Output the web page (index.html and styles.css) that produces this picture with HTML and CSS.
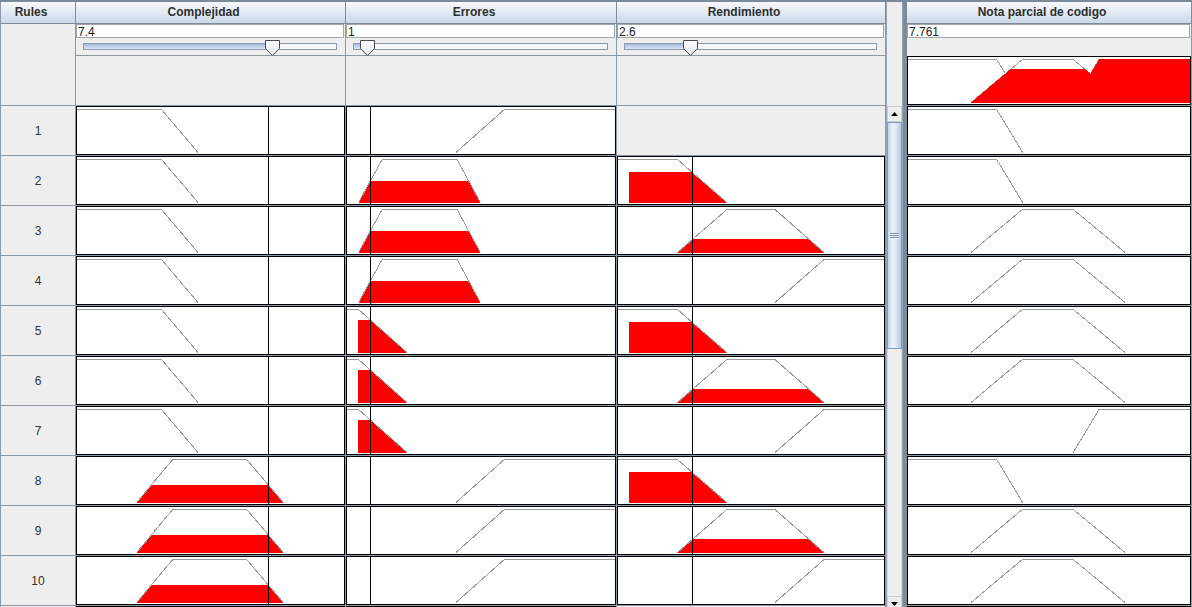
FILE: index.html
```html
<!DOCTYPE html>
<html lang="es">
<head>
<meta charset="utf-8">
<title>Rules</title>
<link rel="stylesheet" href="styles.css">
</head>
<body>
<svg class="defs" width="0" height="0" aria-hidden="true">
  <defs>
    <linearGradient id="thumbg" x1="0" y1="0" x2="0" y2="1">
      <stop offset="0" stop-color="#ffffff"/>
      <stop offset="1" stop-color="#dde4ec"/>
    </linearGradient>
    <!-- Complejidad -->
    <g id="c-low">
      <polyline points="0,2.5 84.5,2.5 121,45.5" fill="none" stroke="#9a9a9a" shape-rendering="crispEdges"/>
      <line x1="191.5" y1="0" x2="191.5" y2="47" stroke="#000" shape-rendering="crispEdges"/>
    </g>
    <g id="c-med">
      <polygon points="59.3,46 74.35,28 191.4,28 206.7,46" fill="#ff0000" shape-rendering="crispEdges"/>
      <polyline points="59.7,45.5 95.7,2.5 169.7,2.5 206.3,45.5" fill="none" stroke="#9a9a9a" shape-rendering="crispEdges"/>
      <line x1="191.5" y1="0" x2="191.5" y2="47" stroke="#000" shape-rendering="crispEdges"/>
    </g>
    <!-- Errores -->
    <g id="e-high">
      <polyline points="109,45.5 157.3,2.5 268,2.5" fill="none" stroke="#9a9a9a" shape-rendering="crispEdges"/>
      <line x1="23.5" y1="0" x2="23.5" y2="47" stroke="#000" shape-rendering="crispEdges"/>
    </g>
    <g id="e-med">
      <polygon points="11.3,46 23.35,24 121.75,24 133.7,46" fill="#ff0000" shape-rendering="crispEdges"/>
      <polyline points="11.6,45.5 35.1,2.5 110.1,2.5 133.4,45.5" fill="none" stroke="#9a9a9a" shape-rendering="crispEdges"/>
      <line x1="23.5" y1="0" x2="23.5" y2="47" stroke="#000" shape-rendering="crispEdges"/>
    </g>
    <g id="e-low">
      <polygon points="11,13 23.44,13 60.66,46 11,46" fill="#ff0000" shape-rendering="crispEdges"/>
      <polyline points="0,2.5 11.6,2.5 60.1,45.5" fill="none" stroke="#9a9a9a" shape-rendering="crispEdges"/>
      <line x1="23.5" y1="0" x2="23.5" y2="47" stroke="#000" shape-rendering="crispEdges"/>
    </g>
    <!-- Rendimiento -->
    <g id="r-low">
      <polygon points="10.5,15 74,15 109.4,46 10.5,46" fill="#ff0000" shape-rendering="crispEdges"/>
      <polyline points="0,2.5 59.5,2.5 108.8,45.5" fill="none" stroke="#9a9a9a" shape-rendering="crispEdges"/>
      <line x1="74.5" y1="0" x2="74.5" y2="47" stroke="#000" shape-rendering="crispEdges"/>
    </g>
    <g id="r-med">
      <polygon points="58.9,46 75,32 190.6,32 206.6,46" fill="#ff0000" shape-rendering="crispEdges"/>
      <polyline points="59.5,45.5 108.8,2.5 157,2.5 206,45.5" fill="none" stroke="#9a9a9a" shape-rendering="crispEdges"/>
      <line x1="74.5" y1="0" x2="74.5" y2="47" stroke="#000" shape-rendering="crispEdges"/>
    </g>
    <g id="r-high">
      <polyline points="157,45.5 206,2.5 266,2.5" fill="none" stroke="#9a9a9a" shape-rendering="crispEdges"/>
      <line x1="74.5" y1="0" x2="74.5" y2="47" stroke="#000" shape-rendering="crispEdges"/>
    </g>
    <!-- Nota parcial de codigo -->
    <polyline id="o-low" points="0,2.5 88.7,2.5 114.7,45.5" fill="none" stroke="#9a9a9a" shape-rendering="crispEdges"/>
    <polyline id="o-med" points="63,45.5 114.3,2.5 165.3,2.5 217,45.5" fill="none" stroke="#9a9a9a" shape-rendering="crispEdges"/>
    <polyline id="o-high" points="165.3,45.5 191,2.5 282,2.5" fill="none" stroke="#9a9a9a" shape-rendering="crispEdges"/>
    <g id="agg">
      <use href="#o-low"/>
      <use href="#o-med"/>
      <use href="#o-high"/>
      <polygon points="62.4,46 103,12 176.7,12 182.5,16.7 191.3,2 282,2 282,46" fill="#ff0000" shape-rendering="crispEdges"/>
    </g>
  </defs>
</svg>

<div class="app">
  <div class="left">
    <div class="hrow">
      <div class="hcell w-rules">Rules</div>
      <div class="hcell w-cx">Complejidad</div>
      <div class="hcell w-er">Errores</div>
      <div class="hcell w-rd">Rendimiento</div>
    </div>
    <div class="irow">
      <div class="icell w-rules"></div>
      <div class="icell w-cx">
        <div class="tf">7.4</div>
        <div class="slider"><div class="track"><div class="fill" style="width:188px"></div><svg class="thumb" style="left:181px" width="15" height="16"><path d="M0.5,0.5 H14.5 V8.5 L7.5,15.5 L0.5,8.5 Z" fill="url(#thumbg)" stroke="#4a4a4a"/></svg></div></div>
      </div>
      <div class="icell w-er">
        <div class="tf">1</div>
        <div class="slider"><div class="track"><div class="fill" style="width:13px"></div><svg class="thumb" style="left:6px" width="15" height="16"><path d="M0.5,0.5 H14.5 V8.5 L7.5,15.5 L0.5,8.5 Z" fill="url(#thumbg)" stroke="#4a4a4a"/></svg></div></div>
      </div>
      <div class="icell w-rd">
        <div class="tf">2.6</div>
        <div class="slider"><div class="track"><div class="fill" style="width:65px"></div><svg class="thumb" style="left:58px" width="15" height="16"><path d="M0.5,0.5 H14.5 V8.5 L7.5,15.5 L0.5,8.5 Z" fill="url(#thumbg)" stroke="#4a4a4a"/></svg></div></div>
      </div>
    </div>

    <div class="row">
      <div class="lab w-rules">1</div>
      <div class="cell w-cx"><div class="box"><svg width="267" height="47"><use href="#c-low"/></svg></div></div>
      <div class="cell w-er"><div class="box"><svg width="268" height="47"><use href="#e-high"/></svg></div></div>
      <div class="cell w-rd"></div>
    </div>
    <div class="row">
      <div class="lab w-rules">2</div>
      <div class="cell w-cx"><div class="box"><svg width="267" height="47"><use href="#c-low"/></svg></div></div>
      <div class="cell w-er"><div class="box"><svg width="268" height="47"><use href="#e-med"/></svg></div></div>
      <div class="cell w-rd"><div class="box"><svg width="266" height="47"><use href="#r-low"/></svg></div></div>
    </div>
    <div class="row">
      <div class="lab w-rules">3</div>
      <div class="cell w-cx"><div class="box"><svg width="267" height="47"><use href="#c-low"/></svg></div></div>
      <div class="cell w-er"><div class="box"><svg width="268" height="47"><use href="#e-med"/></svg></div></div>
      <div class="cell w-rd"><div class="box"><svg width="266" height="47"><use href="#r-med"/></svg></div></div>
    </div>
    <div class="row">
      <div class="lab w-rules">4</div>
      <div class="cell w-cx"><div class="box"><svg width="267" height="47"><use href="#c-low"/></svg></div></div>
      <div class="cell w-er"><div class="box"><svg width="268" height="47"><use href="#e-med"/></svg></div></div>
      <div class="cell w-rd"><div class="box"><svg width="266" height="47"><use href="#r-high"/></svg></div></div>
    </div>
    <div class="row">
      <div class="lab w-rules">5</div>
      <div class="cell w-cx"><div class="box"><svg width="267" height="47"><use href="#c-low"/></svg></div></div>
      <div class="cell w-er"><div class="box"><svg width="268" height="47"><use href="#e-low"/></svg></div></div>
      <div class="cell w-rd"><div class="box"><svg width="266" height="47"><use href="#r-low"/></svg></div></div>
    </div>
    <div class="row">
      <div class="lab w-rules">6</div>
      <div class="cell w-cx"><div class="box"><svg width="267" height="47"><use href="#c-low"/></svg></div></div>
      <div class="cell w-er"><div class="box"><svg width="268" height="47"><use href="#e-low"/></svg></div></div>
      <div class="cell w-rd"><div class="box"><svg width="266" height="47"><use href="#r-med"/></svg></div></div>
    </div>
    <div class="row">
      <div class="lab w-rules">7</div>
      <div class="cell w-cx"><div class="box"><svg width="267" height="47"><use href="#c-low"/></svg></div></div>
      <div class="cell w-er"><div class="box"><svg width="268" height="47"><use href="#e-low"/></svg></div></div>
      <div class="cell w-rd"><div class="box"><svg width="266" height="47"><use href="#r-high"/></svg></div></div>
    </div>
    <div class="row">
      <div class="lab w-rules">8</div>
      <div class="cell w-cx"><div class="box"><svg width="267" height="47"><use href="#c-med"/></svg></div></div>
      <div class="cell w-er"><div class="box"><svg width="268" height="47"><use href="#e-high"/></svg></div></div>
      <div class="cell w-rd"><div class="box"><svg width="266" height="47"><use href="#r-low"/></svg></div></div>
    </div>
    <div class="row">
      <div class="lab w-rules">9</div>
      <div class="cell w-cx"><div class="box"><svg width="267" height="47"><use href="#c-med"/></svg></div></div>
      <div class="cell w-er"><div class="box"><svg width="268" height="47"><use href="#e-high"/></svg></div></div>
      <div class="cell w-rd"><div class="box"><svg width="266" height="47"><use href="#r-med"/></svg></div></div>
    </div>
    <div class="row">
      <div class="lab w-rules">10</div>
      <div class="cell w-cx"><div class="box"><svg width="267" height="47"><use href="#c-med"/></svg></div></div>
      <div class="cell w-er"><div class="box"><svg width="268" height="47"><use href="#e-high"/></svg></div></div>
      <div class="cell w-rd"><div class="box"><svg width="266" height="47"><use href="#r-high"/></svg></div></div>
    </div>
    <div class="row row-peek">
      <div class="lab w-rules"></div>
      <div class="cell w-cx"><div class="box"></div></div>
      <div class="cell w-er"><div class="box"></div></div>
      <div class="cell w-rd"></div>
    </div>
  </div>

  <div class="scroll">
    <div class="sc-head"></div>
    <div class="sc-gap"></div>
    <div class="sc-btn"><svg width="7" height="4"><path d="M0,4 L3.5,0 L7,4 Z" fill="#000"/></svg></div>
    <div class="sc-thumb"><span class="grip"></span></div>
    <div class="sc-track"></div>
    <div class="sc-btn sc-down"><svg width="7" height="4"><path d="M0,0 L7,0 L3.5,4 Z" fill="#000"/></svg></div>
  </div>

  <div class="divider"></div>

  <div class="right">
    <div class="hrow">
      <div class="hcell w-out">Nota parcial de codigo</div>
    </div>
    <div class="irow">
      <div class="icell w-out">
        <div class="tf">7.761</div>
        <div class="ogap"></div>
        <div class="box"><svg width="282" height="47"><use href="#agg"/></svg></div>
      </div>
    </div>
    <div class="row"><div class="cell w-out"><div class="box"><svg width="282" height="47"><use href="#o-low"/></svg></div></div></div>
    <div class="row"><div class="cell w-out"><div class="box"><svg width="282" height="47"><use href="#o-low"/></svg></div></div></div>
    <div class="row"><div class="cell w-out"><div class="box"><svg width="282" height="47"><use href="#o-med"/></svg></div></div></div>
    <div class="row"><div class="cell w-out"><div class="box"><svg width="282" height="47"><use href="#o-med"/></svg></div></div></div>
    <div class="row"><div class="cell w-out"><div class="box"><svg width="282" height="47"><use href="#o-med"/></svg></div></div></div>
    <div class="row"><div class="cell w-out"><div class="box"><svg width="282" height="47"><use href="#o-med"/></svg></div></div></div>
    <div class="row"><div class="cell w-out"><div class="box"><svg width="282" height="47"><use href="#o-high"/></svg></div></div></div>
    <div class="row"><div class="cell w-out"><div class="box"><svg width="282" height="47"><use href="#o-low"/></svg></div></div></div>
    <div class="row"><div class="cell w-out"><div class="box"><svg width="282" height="47"><use href="#o-med"/></svg></div></div></div>
    <div class="row"><div class="cell w-out"><div class="box"><svg width="282" height="47"><use href="#o-med"/></svg></div></div></div>
    <div class="row row-peek"><div class="cell w-out"><div class="box"></div></div></div>
  </div>
</div>
</body>
</html>
```

FILE: styles.css
```css
* { box-sizing: border-box; }
html, body { margin: 0; padding: 0; }
body {
  width: 1192px;
  height: 607px;
  overflow: hidden;
  background: #eeeeee;
  font-family: "Liberation Sans", Arial, sans-serif;
  color: #333333;
}
.defs { display: block; width: 0; height: 0; overflow: hidden; }

.app {
  display: flex;
  height: 607px;
  overflow: hidden;
  border-top: 2px solid #7d8b99;
}

.left {
  width: 886px;
  flex-shrink: 0;
  border-left: 1px solid #8b98a5;
  display: flex;
  flex-direction: column;
}
.right {
  width: 285px;
  flex-shrink: 0;
  display: flex;
  flex-direction: column;
}

.hrow, .irow, .row { display: flex; flex-shrink: 0; }
.hrow { height: 22px; }
.irow { height: 82px; }
.row { height: 50px; }
.row-peek { height: 50px; }

.w-rules { width: 75px; }
.w-cx { width: 270px; }
.w-er { width: 271px; }
.w-rd { width: 269px; }
.w-out { width: 285px; }

.hcell {
  height: 22px;
  border-right: 1px solid #7f8d9b;
  border-bottom: 1px solid #7f8d9b;
  background: linear-gradient(#f7f9fc, #e2eaf3 50%, #c9d8e8);
  font-weight: bold;
  font-size: 12px;
  line-height: 21px;
  text-align: center;
  padding-right: 14px;
  color: #2e2e2e;
  white-space: nowrap;
}

.icell, .cell, .lab {
  border-right: 1px solid #8b98a5;
  border-bottom: 1px solid #8b98a5;
}
.icell { height: 82px; }
.cell, .lab { height: 50px; }

.lab {
  display: flex;
  align-items: center;
  justify-content: center;
  font-size: 12px;
  color: #333333;
}

.tf {
  height: 14px;
  margin-right: 1px;
  border: 1px solid #a2a7ad;
  background: #ffffff;
  font-size: 12px;
  line-height: 15px;
  padding-left: 1px;
  color: #1a1a1a;
  white-space: nowrap;
}

.slider {
  height: 18px;
  border-bottom: 1px solid #8b98a5;
  padding-top: 5px;
}
.track {
  position: relative;
  margin-left: 7px;
  width: calc(100% - 15px);
  height: 7px;
  border: 1px solid #8c9aae;
  background: #f6f7f9;
}
.fill {
  height: 100%;
  background: linear-gradient(#a5bddb, #dbe6f3);
}
.thumb {
  position: absolute;
  top: -4px;
  display: block;
}

.ogap { height: 18px; }

.box {
  height: 49px;
  border: 1px solid #000000;
  background: #ffffff;
}
.box svg { display: block; }

.scroll {
  width: 17px;
  flex-shrink: 0;
  border-left: 1px solid #99a5b1;
  border-right: 1px solid #99a5b1;
  display: flex;
  flex-direction: column;
}
.sc-head { height: 22px; flex-shrink: 0; }
.sc-gap { height: 82px; flex-shrink: 0; }
.sc-btn {
  height: 16px;
  flex-shrink: 0;
  display: flex;
  align-items: center;
  justify-content: center;
  background: #eeeeee;
  border: 1px solid #c6cdd5;
}
.sc-btn svg { display: block; }
.sc-thumb {
  height: 227px;
  flex-shrink: 0;
  border: 1px solid #7e9bc4;
  background: linear-gradient(to right, #c3d5ec, #edf3fa 35%, #dfe9f5 60%, #b1c8e4);
  display: flex;
  align-items: center;
  justify-content: center;
}
.grip {
  display: block;
  width: 9px;
  height: 6px;
  background: repeating-linear-gradient(#6e8bb6 0 1px, #f4f8fc 1px 2px);
}
.sc-track {
  height: 247px;
  flex-shrink: 0;
  background: #eeeeee;
  border-left: 1px solid #d3dae2;
  border-right: 1px solid #d3dae2;
}

.divider {
  width: 4px;
  flex-shrink: 0;
  background: #7d8b99;
}
```
